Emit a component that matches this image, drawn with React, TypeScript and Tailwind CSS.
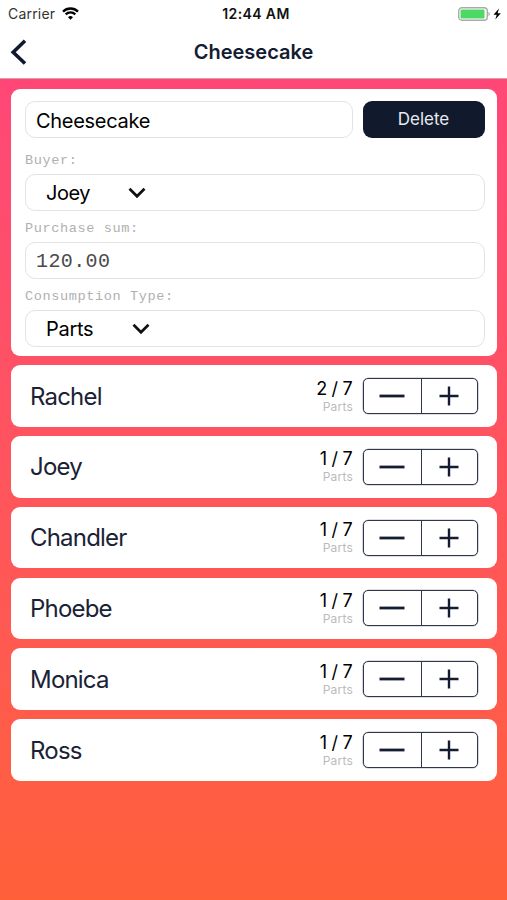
const people: [string, number][] = [["Rachel", 2], ["Joey", 1], ["Chandler", 1], ["Phoebe", 1], ["Monica", 1], ["Ross", 1]];
const label = "block h-[16px] font-['Liberation_Mono',monospace] text-[13.6px] leading-[16px] tracking-[0.6px] text-[#b0b0b0]";
const field = "flex h-[37px] items-center rounded-[10px] border border-[#e2e3e5] bg-white text-[20px] text-black";

function Chevron() {
  return <svg className="h-[12px] w-[18px]" viewBox="0 0 18 12" fill="none" stroke="#111" strokeWidth="2.7"><path d="M1.5 1.8 9 9.3l7.5-7.5" /></svg>;
}

function Stepper() {
  return (
    <div className="flex h-[36px] w-[115px] rounded-[5px] border border-[#30374b] shadow-[0_0_0_0.3px_#737889]">
      <div className="flex w-[58px] items-center justify-center border-r border-[#30374b]">
        <svg width="26" height="22" viewBox="0 0 26 22" stroke="#141c32" strokeWidth="2.8"><path d="M.5 11h25" /></svg>
      </div>
      <div className="flex flex-1 items-center justify-center">
        <svg className="mr-px" width="20" height="20" viewBox="0 0 20 20" stroke="#141c32" strokeWidth="2.4"><path d="M.5 10h19M10 .5v19" /></svg>
      </div>
    </div>
  );
}

export default function App() {
  return (
    <main className="flex h-[900px] w-[507px] flex-col overflow-hidden bg-white font-['Inter',sans-serif]">
      <div className="grid h-[27px] shrink-0 grid-cols-3 items-center pl-2 pr-[5px] text-[14px] text-[#111]">
        <div className="flex items-center gap-[7px]"><span className="tracking-[0.2px] text-[#333]">Carrier</span>
          <svg width="17" height="13" viewBox="0 0 17 13" fill="none" stroke="#000" strokeWidth="2.3"><path d="M1 4.6a10.6 10.6 0 0 1 15 0M3.7 7.4a6.8 6.8 0 0 1 9.6 0" /><path d="M8.5 12.8 6 10.2a3.5 3.5 0 0 1 5 0Z" fill="#000" stroke="none" /></svg>
        </div>
        <span className="pl-[2px] text-center font-semibold tracking-[0.4px]">12:44 AM</span>
        <div className="flex items-center justify-end">
          <svg width="44" height="14" viewBox="0 0 44 14"><rect x=".7" y=".7" width="28.6" height="12.6" rx="3.2" fill="#fff" stroke="#aaa" strokeWidth="1.4" /><rect x="2.5" y="2.5" width="24" height="9" rx="1" fill="#4cd964" /><path d="M30.5 4.8q3 2.2 0 4.4Z" fill="#aaa" /><path d="m41 1.5-5.5 6.2h3.2l-1.4 4.8 5.5-6.2h-3.2Z" fill="#000" /></svg>
        </div>
      </div>
      <header className="grid h-[52px] shrink-0 grid-cols-[60px_1fr_60px] items-center border-b border-[#d9a0b0] pb-[2px]">
        <svg className="ml-[10px]" width="17" height="26" viewBox="0 0 17 26" fill="none" stroke="#10192f" strokeWidth="3.6"><path d="M15 1.8 3.2 13.2 15 24.5" /></svg>
        <h1 className="text-center text-[20px] font-semibold text-[#141c32]">Cheesecake</h1>
      </header>
      <div className="flex flex-1 flex-col gap-[9.3px] bg-linear-to-b from-[#ff4777] to-[#ff6038] pl-[11px] pr-[10px] pt-[10px]">
        <section className="h-[267px] shrink-0 rounded-[9px] bg-white pl-[14px] pr-[12px] pt-[12px]">
          <div className="flex gap-[10px]">
            <div className={`${field} w-[328px] pl-[10px] tracking-[-0.3px]`}><span className="pt-[2px]">Cheesecake</span></div>
            <div className="flex h-[37px] flex-1 items-center justify-center rounded-[9px] bg-[#111a2d] pr-px text-[17px] text-[#e8eaf0]">Delete</div>
          </div>
          <div className="pt-[15px]"><span className={label}>Buyer:</span></div>
          <div className={`${field} mt-[5px] gap-[38px] pl-[20px] tracking-[-0.5px]`}><span className="pt-px">Joey</span><Chevron /></div>
          <div className="pt-[10px]"><span className={label}>Purchase sum:</span></div>
          <div className={`${field} mt-[5px] pl-[10px] pt-[2px] font-['Liberation_Mono',monospace] tracking-[0.4px] !text-[#4a4a4a]`}>120.00</div>
          <div className="pt-[10px]"><span className={label}>Consumption Type:</span></div>
          <div className={`${field} mt-[5px] gap-[39px] pl-[20px] tracking-[-0.3px]`}><span>Parts</span><Chevron /></div>
        </section>
        {people.map(([name, count]) => (
          <section key={name} className="flex h-[61.5px] shrink-0 items-center rounded-[9px] bg-white pl-[19px] pr-[19.5px]">
            <span className="flex-1 pt-px text-[24px] tracking-[-0.8px] text-[#1b2236]">{name}</span>
            <div className="mr-[9.5px] flex flex-col items-end">
              <span className="text-[18px] leading-[20px] tracking-[0.4px] text-black [word-spacing:-1.5px]">{count} / 7</span>
              <span className="text-[12px] leading-[15px] tracking-[0.2px] text-[#bbb]">Parts</span>
            </div>
            <Stepper />
          </section>
        ))}
      </div>
    </main>
  );
}
